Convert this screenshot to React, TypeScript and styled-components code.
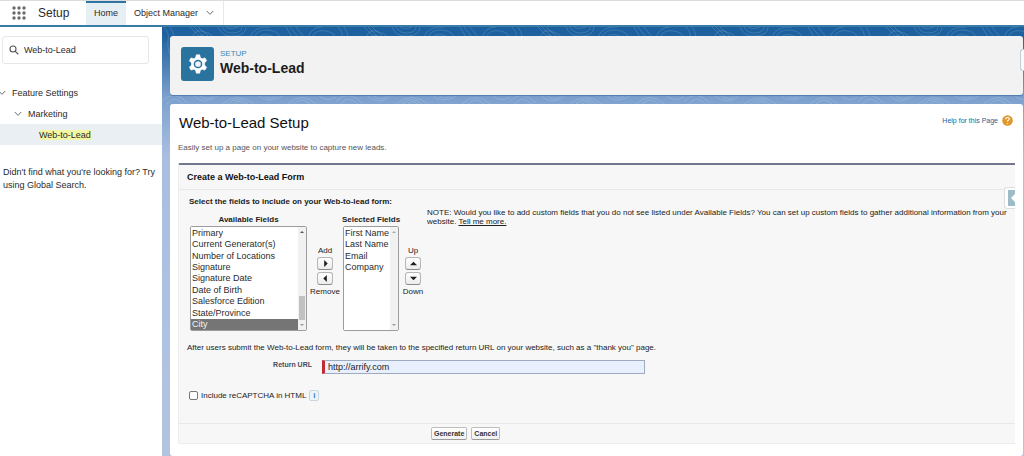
import React from "react";
import styled, { createGlobalStyle } from "styled-components";

const GlobalStyle = createGlobalStyle`
  *, *::before, *::after { box-sizing: border-box; }
  body {
    margin: 0;
    background: #fff;
    color: #2b2b2b;
    font-family: "Liberation Sans", Arial, sans-serif;
    font-size: 9px;
  }
  button, input, select { font-family: inherit; margin: 0; }
  h1, h2, h3, p { margin: 0; font-weight: normal; }
`;

const Page = styled.div`
  display: flex;
  flex-direction: column;
  min-height: 100vh;
`;

const TopBar = styled.header`
  display: flex;
  height: 27px;
  border-top: 1px solid #dcdcdc;
  border-bottom: 2px solid #3a7ca8;
`;

const Launcher = styled.button`
  display: flex;
  align-items: center;
  width: 38px;
  padding: 0 0 0 12px;
  border: 0;
  background: none;
`;

const AppName = styled.div`
  width: 48px;
  line-height: 24px;
  font-size: 12px;
`;

const Tab = styled.a<{ $active?: boolean }>`
  display: flex;
  align-items: center;
  gap: 8px;
  padding: 0 8px 2px;
  border-top: 2px solid ${(p) => (p.$active ? "#2f74a3" : "transparent")};
  background: ${(p) => (p.$active ? "#e6eff4" : "transparent")};
  color: #2b2b2b;
  text-decoration: none;
`;

const TabEnd = styled.div`
  width: 2px;
  border-right: 1px solid #e8e8e8;
`;

const Body = styled.div`
  display: flex;
  flex: 1;
`;

const Sidebar = styled.aside`
  flex: none;
  width: 162px;
  padding-top: 9px;
`;

const SearchBox = styled.label`
  display: flex;
  align-items: center;
  gap: 5px;
  width: 147px;
  height: 28px;
  margin: 0 0 18px 2px;
  padding-left: 6px;
  border: 1px solid #e6e6e6;
  border-radius: 3px;
`;

const SearchInput = styled.input`
  min-width: 0;
  flex: 1;
  padding: 0;
  border: 0;
  outline: 0;
  background: none;
  color: #2b2b2b;
  font-size: 9px;
`;

const Tree = styled.nav`
  overflow: hidden;
`;

const TreeItem = styled.a<{ $indent: number; $active?: boolean }>`
  display: flex;
  align-items: center;
  gap: 6px;
  height: 21px;
  margin-left: -2px;
  padding-left: ${(p) => p.$indent}px;
  background: ${(p) => (p.$active ? "#e9eff3" : "transparent")};
  color: #2b2b2b;
  text-decoration: none;
`;

const Mark = styled.mark`
  background: #f3f7a4;
  color: inherit;
`;

const SideNote = styled.p`
  padding: 21px 0 0 3px;
  line-height: 13px;
`;

const Main = styled.main`
  position: relative;
  display: flex;
  flex: 1;
  flex-direction: column;
  gap: 8px;
  min-width: 0;
  padding: 9px 1px 0 8px;
  background: linear-gradient(#1b5f9f 0, #1f629f 9px, #7ba0cd 70px, #a9bfe0 130px, #b1c4e2 100%);
`;

const Backdrop = styled.svg`
  position: absolute;
  top: 0;
  left: 0;
  width: 100%;
  height: 130px;
`;

const Card = styled.section`
  position: relative;
  border-radius: 3px;
  background: #fff;
`;

const PageHeader = styled(Card)`
  display: flex;
  align-items: flex-start;
  gap: 6px;
  height: 59px;
  margin-bottom: 1px;
  padding: 11px;
  background: #f2f2f2;
  box-shadow: 0 1px 1px #4f7cae;
`;

const GearTile = styled.div`
  display: flex;
  align-items: center;
  justify-content: center;
  width: 33px;
  height: 34px;
  border-radius: 3px;
  background: #2b739f;
`;

const Eyebrow = styled.p`
  line-height: 14px;
  font-size: 8px;
  color: #3f86b4;
`;

const Title = styled.h1`
  line-height: 15px;
  font-size: 14px;
  font-weight: bold;
  color: #1c1c1c;
`;

const EdgeHandle = styled.div`
  position: absolute;
  top: 13px;
  right: -1px;
  width: 4px;
  height: 22px;
  border: 1px solid #c4ccd4;
  border-right: 0;
  border-radius: 3px 0 0 3px;
  background: #f7f9fb;
`;

const Content = styled(Card)`
  flex: 1;
  padding: 11px 8px 12px;
`;

const ContentHead = styled.div`
  display: flex;
  justify-content: space-between;
`;

const Heading = styled.h2`
  padding-left: 1px;
  line-height: 16px;
  font-size: 15px;
  color: #111;
`;

const HelpLink = styled.a`
  display: flex;
  align-items: center;
  gap: 4px;
  height: 10px;
  padding-right: 2px;
  font-size: 7px;
  color: #1f5f94;
  text-decoration: none;
`;

const Intro = styled.p`
  padding: 11px 0 9px;
  line-height: 12px;
  font-size: 8px;
  color: #555;
`;

const Panel = styled.form`
  position: relative;
  border: 1px solid #ececec;
  border-top: 2px solid #74778f;
  border-right: 0;
  border-radius: 2px 0 0 2px;
  background: #f7f7f7;
  font-size: 8px;
  color: #222;
`;

const PanelTitle = styled.h3`
  padding-left: 8px;
  line-height: 24px;
  border-bottom: 1px solid #e9e9e9;
  font-size: 9px;
  font-weight: bold;
  color: #111;
`;

const PanelBody = styled.div`
  padding: 7px 0 0 8px;
`;

const Lead = styled.p`
  padding-left: 2px;
  line-height: 10px;
  font-weight: bold;
`;

const Columns = styled.div`
  display: flex;
  align-items: flex-start;
  padding-left: 3px;
`;

const Picker = styled.div<{ $width: number }>`
  display: flex;
  flex: none;
  flex-direction: column;
  width: ${(p) => p.$width}px;
  padding-top: 6px;
`;

const PickerLabel = styled.label`
  display: flex;
  justify-content: center;
  line-height: 13px;
  white-space: nowrap;
  font-weight: bold;
`;

const ListFrame = styled.div`
  display: flex;
  height: 105px;
  border: 1px solid #9c9c9c;
  border-radius: 2px;
  background: #fff;
`;

const ListSelect = styled.select`
  flex: 1;
  min-width: 0;
  height: 103px;
  padding: 0;
  border: 0;
  border-radius: 0;
  outline: 0;
  overflow: hidden;
  background: #fff;
  color: #2b2b2b;
  font-size: 9px;

  option {
    display: flex;
    align-items: center;
    height: calc(100% / 9);
    min-height: 0;
    padding: 0 1px;
    line-height: 11px;
  }
  option:checked {
    background: linear-gradient(#757575, #757575);
    -webkit-text-fill-color: #f4f4f4;
  }
`;

const Track = styled.div`
  display: flex;
  flex: none;
  flex-direction: column;
  align-items: center;
  justify-content: space-between;
  width: 8px;
  padding: 3px 0;
  background: #f1f1f1;
`;

const Thumb = styled.div`
  width: 6px;
  height: 24px;
  margin: auto 0 3px;
  background: #c1c1c1;
`;

const Mover = styled.div<{ $width: number }>`
  display: flex;
  flex: none;
  flex-direction: column;
  align-items: center;
  gap: 2px;
  width: ${(p) => p.$width}px;
  padding-top: 39px;
  line-height: 9px;
`;

const MoveButton = styled.button`
  display: flex;
  align-items: center;
  justify-content: center;
  width: 16px;
  height: 13px;
  padding: 0;
  border: 1px solid #b5b5b5;
  border-bottom-color: #8a8a8a;
  border-radius: 3px;
  background: linear-gradient(#fff, #ececec);
`;

const Note = styled.p`
  flex: 1;
  padding-top: 1px;
  line-height: 9px;

  a { color: inherit; }
`;

const After = styled.p`
  padding-top: 11px;
  line-height: 12px;
`;

const UrlRow = styled.div`
  display: flex;
  align-items: center;
  padding: 6px 0 0;
`;

const UrlLabel = styled.label`
  width: 125px;
  padding-bottom: 5px;
  text-align: right;
  font-size: 7px;
  font-weight: bold;
  color: #4a4a56;
`;

const UrlInput = styled.input`
  width: 323px;
  height: 14px;
  margin-left: 10px;
  padding: 0 3px;
  border: 1px solid #9daabf;
  border-left: 3px solid #c22b35;
  background: #e8effd;
  color: #1c1c28;
  font-size: 9px;
`;

const CaptchaRow = styled.div`
  display: flex;
  align-items: center;
  gap: 3px;
  height: 14px;
  margin: 14px 0 21px 2px;

  label { display: flex; align-items: center; gap: 3px; }
`;

const Check = styled.input`
  appearance: none;
  width: 9px;
  height: 9px;
  border: 1px solid #777;
  border-radius: 2px;
  background: #fff;
`;

const InfoButton = styled.button`
  width: 10px;
  height: 11px;
  padding: 0;
  border: 1px solid #c9d6de;
  border-radius: 2px;
  background: #edf4f9;
  color: #2f7fc2;
  font-size: 8px;
  line-height: 9px;
  font-weight: bold;
`;

const Actions = styled.div`
  display: flex;
  gap: 4px;
  height: 20px;
  padding: 3px 0 0 252px;
  border-top: 1px solid #e9e9e9;
`;

const ActionButton = styled.button`
  height: 13px;
  padding: 0 2px;
  border: 1px solid #bdbdbd;
  border-bottom-color: #9a9a9a;
  border-radius: 2px;
  background: linear-gradient(#fff, #f1f1f1);
  color: #333;
  font-size: 7px;
  font-weight: bold;
`;

const SideTab = styled.button`
  position: absolute;
  top: 22px;
  right: 0;
  display: flex;
  width: 11px;
  height: 22px;
  padding: 2px 0 2px 3px;
  border: 1px solid #dadfe2;
  border-right: 0;
  border-radius: 3px 0 0 3px;
  background: #fff;
`;

const Chevron = () => (
  <svg width="8" height="6" viewBox="0 0 8 6" fill="none" stroke="#6b6e72" strokeWidth="1" strokeLinecap="round">
    <path d="M1 1.2 4 4.4 7 1.2" />
  </svg>
);

const Arrow = ({ d, size = 8, color = "#1e1e1e" }: { d: string; size?: number; color?: string }) => (
  <svg width={size} height={size} viewBox="0 0 8 8" fill={color}>
    <path d={d} />
  </svg>
);

const UP = "M0 6h8L4 2z";
const DOWN = "M0 2h8L4 6z";
const RIGHT = "M2.500 0v8L6.500 4z";
const LEFT = "M5.500 0v8L1.500 4z";

const ScrollTrack = ({ thumb }: { thumb?: boolean }) => (
  <Track aria-hidden="true">
    <Arrow d={UP} size={4} color={thumb ? "#555" : "#a9a9a9"} />
    {thumb && <Thumb />}
    <Arrow d={DOWN} size={4} color="#999" />
  </Track>
);

const Contours = () => (
  <Backdrop aria-hidden="true" fill="none" stroke="#fff" strokeOpacity="0.18" strokeWidth="0.8">
    <defs>
      <pattern id="contours" width="174" height="130" patternUnits="userSpaceOnUse">
        <path d="M2 0Q8 6 6 14T14 40M8 0Q14 8 12 20M28 0 38 10M32 0 42 10M36 0 46 9" />
        <path d="M30 12Q32 2 40 4T52 10M34 12Q38 5 46 12M56 0Q60 10 72 9T84 0M60 0Q64 7 72 6T80 0M64 0Q68 3 76 0" />
        <path d="M92 10Q96 2 106 3T118 10M88 10Q92 -1 108 0M97 10Q102 5 112 10M124 0 130 10M128 0 136 10M134 0 142 10M150 10Q154 2 164 4T172 10M146 10Q150 0 160 0" />
        <path d="M4 78Q12 66 22 78M0 74Q12 62 26 76M30 68Q44 80 56 68M36 68Q46 76 52 68M60 77Q76 64 92 77M66 77Q76 68 86 77M72 77Q77 72 81 77" />
        <path d="M96 68Q106 78 122 68M102 68Q108 74 116 68M126 77Q140 64 154 77M132 77Q140 69 148 77M156 68Q164 76 174 70" />
      </pattern>
    </defs>
    <rect width="100%" height="100%" fill="url(#contours)" stroke="none" />
  </Backdrop>
);

const AVAILABLE = [
  "Primary",
  "Current Generator(s)",
  "Number of Locations",
  "Signature",
  "Signature Date",
  "Date of Birth",
  "Salesforce Edition",
  "State/Province",
  "City",
];
const SELECTED = ["First Name", "Last Name", "Email", "Company"];

export default function App() {
  return (
    <>
      <GlobalStyle />
      <Page>
        <TopBar>
          <Launcher aria-label="App Launcher">
            <svg width="14" height="14" viewBox="0 0 14 14" fill="#6b6b6b">
              {[2, 7, 12].map((y) => [2, 7, 12].map((x) => <circle key={`${x}-${y}`} cx={x} cy={y} r="1.7" />))}
            </svg>
          </Launcher>
          <AppName>Setup</AppName>
          <Tab href="#home" $active>Home</Tab>
          <Tab href="#objects">
            Object Manager <Chevron />
          </Tab>
          <TabEnd />
        </TopBar>
        <Body>
          <Sidebar>
            <SearchBox>
              <svg width="10" height="10" viewBox="0 0 10 10" fill="none" stroke="#555" strokeWidth="1.1" strokeLinecap="round">
                <circle cx="4" cy="4" r="3" />
                <path d="M6.300 6.300 9 9" />
              </svg>
              <SearchInput aria-label="Quick Find" defaultValue="Web-to-Lead" />
            </SearchBox>
            <Tree>
              <TreeItem href="#features" $indent={0}><Chevron />Feature Settings</TreeItem>
              <TreeItem href="#marketing" $indent={16}><Chevron />Marketing</TreeItem>
              <TreeItem href="#web-to-lead" $indent={41} $active><Mark>Web-to-Lead</Mark></TreeItem>
            </Tree>
            <SideNote>
              Didn't find what you're looking for? Try using Global Search.
            </SideNote>
          </Sidebar>
          <Main>
            <Contours />
            <PageHeader>
              <GearTile>
                <svg width="20" height="20" viewBox="0 0 20 20">
                  <path
                    fill="#fff"
                    d="M8.400 .8h3.200l.9 3 1.500.9 3-.8 1.600 2.800-2.100 2.200v2.200l2.100 2.200-1.600 2.800-3-.8-1.500.9-.9 3H8.400l-.9-3-1.500-.9-3 .8-1.600-2.800 2.100-2.200V8.900L1.400 6.700 3 3.900l3 .8 1.500-.9z"
                    stroke="#fff"
                    strokeWidth="0.6"
                    strokeLinejoin="round"
                  />
                  <circle cx="10" cy="10" r="3.600" fill="#eef4f8" stroke="#2b739f" strokeWidth="1.500" />
                </svg>
              </GearTile>
              <div>
                <Eyebrow>SETUP</Eyebrow>
                <Title>Web-to-Lead</Title>
              </div>
              <EdgeHandle />
            </PageHeader>
            <Content>
              <ContentHead>
                <Heading>Web-to-Lead Setup</Heading>
                <HelpLink href="#help">
                  Help for this Page
                  <svg width="11" height="11" viewBox="0 0 11 11">
                    <circle cx="5.500" cy="5.500" r="5.300" fill="#e0982c" />
                    <path d="M3.800 4.300q0-1.800 1.800-1.800t1.700 1.500q0 .8-1 1.300t-.8 1.200M5.500 8v.8" fill="none" stroke="#fff" strokeWidth="1.200" />
                  </svg>
                </HelpLink>
              </ContentHead>
              <Intro>Easily set up a page on your website to capture new leads.</Intro>
              <Panel onSubmit={(e) => e.preventDefault()}>
                <PanelTitle>Create a Web-to-Lead Form</PanelTitle>
                <PanelBody>
                  <Lead>Select the fields to include on your Web-to-lead form:</Lead>
                  <Columns>
                    <Picker $width={117}>
                      <PickerLabel htmlFor="available">Available Fields</PickerLabel>
                      <ListFrame>
                        <ListSelect id="available" multiple size={9} defaultValue={["City"]}>
                          {AVAILABLE.map((f) => <option key={f}>{f}</option>)}
                        </ListSelect>
                        <ScrollTrack thumb />
                      </ListFrame>
                    </Picker>
                    <Mover $width={36}>
                      Add
                      <MoveButton type="button" aria-label="Add"><Arrow d={RIGHT} size={7} /></MoveButton>
                      <MoveButton type="button" aria-label="Remove"><Arrow d={LEFT} size={7} /></MoveButton>
                      Remove
                    </Mover>
                    <Picker $width={56}>
                      <PickerLabel htmlFor="selected">Selected Fields</PickerLabel>
                      <ListFrame>
                        <ListSelect id="selected" multiple size={9}>
                          {SELECTED.map((f) => <option key={f}>{f}</option>)}
                        </ListSelect>
                        <ScrollTrack />
                      </ListFrame>
                    </Picker>
                    <Mover $width={28}>
                      Up
                      <MoveButton type="button" aria-label="Up"><Arrow d={UP} size={7} /></MoveButton>
                      <MoveButton type="button" aria-label="Down"><Arrow d={DOWN} size={7} /></MoveButton>
                      Down
                    </Mover>
                    <Note>
                      NOTE: Would you like to add custom fields that you do not see listed under Available Fields? You can set up custom fields to gather additional information from your website. <a href="#more">Tell me more.</a>
                    </Note>
                  </Columns>
                  <After>
                    After users submit the Web-to-Lead form, they will be taken to the specified return URL on your website, such as a "thank you" page.
                  </After>
                  <UrlRow>
                    <UrlLabel htmlFor="return-url">Return URL</UrlLabel>
                    <UrlInput id="return-url" defaultValue="http://arrify.com" />
                  </UrlRow>
                  <CaptchaRow>
                    <label><Check type="checkbox" />Include reCAPTCHA in HTML</label>
                    <InfoButton type="button">i</InfoButton>
                  </CaptchaRow>
                </PanelBody>
                <Actions>
                  <ActionButton type="submit">Generate</ActionButton>
                  <ActionButton type="button">Cancel</ActionButton>
                </Actions>
                <SideTab type="button" aria-label="Open panel">
                  <svg width="7" height="16" viewBox="0 0 7 16">
                    <path fill="#9dbcc8" d="M0 0h7v16H0z" />
                    <path fill="#fff" d="M7 4v8L3 8z" />
                  </svg>
                </SideTab>
              </Panel>
            </Content>
          </Main>
        </Body>
      </Page>
    </>
  );
}
